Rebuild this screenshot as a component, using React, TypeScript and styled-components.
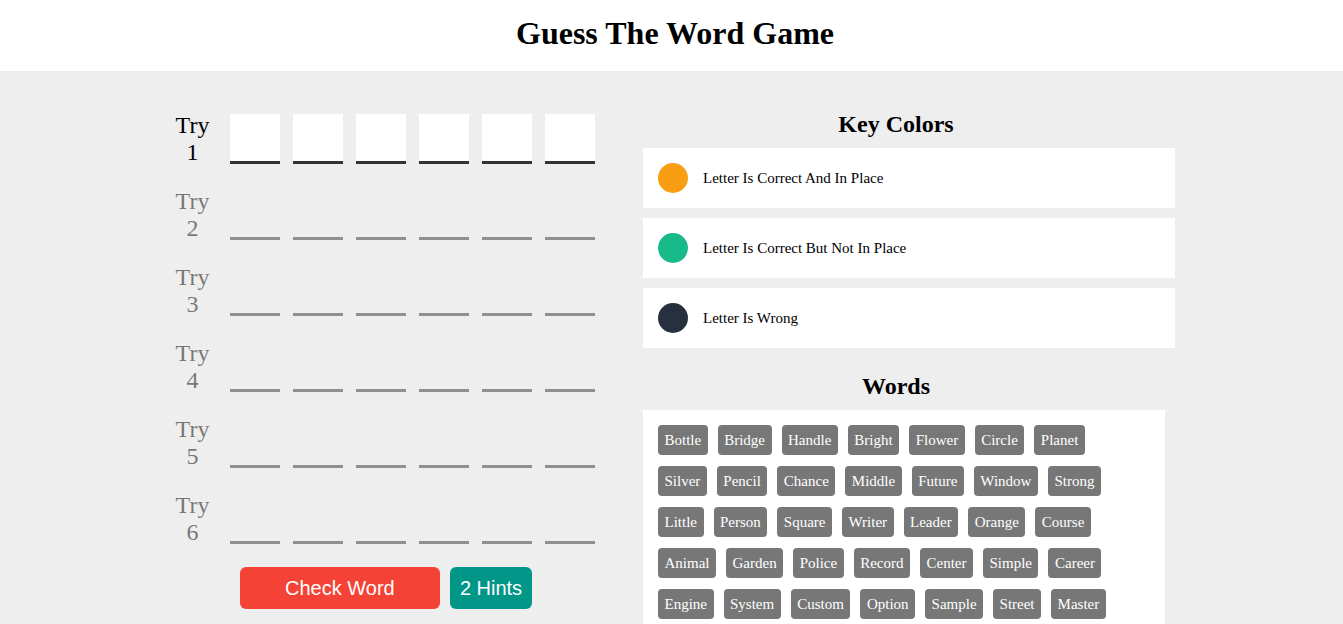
import React from 'react';
import styled, { createGlobalStyle } from 'styled-components';

const GlobalStyle = createGlobalStyle`
  * {
    box-sizing: border-box;
  }
  body {
    margin: 0;
    background-color: #eee;
    font-family: 'Liberation Serif', 'Times New Roman', serif;
  }
`;

const Header = styled.header`
  background-color: #fff;
  padding: 15px 0 19px 7px;
  text-align: center;
`;

const Title = styled.h1`
  margin: 0;
  font-size: 32px;
  line-height: 37px;
`;

const Main = styled.main`
  padding: 39px 0 0 7px;
`;

const Container = styled.div`
  width: 1000px;
  margin: 0 auto;
  display: flex;
  gap: 48px;
  align-items: flex-start;
`;

const GuessArea = styled.section`
  width: 420px;
  margin-top: 2px;
  display: flex;
  flex-direction: column;
  gap: 22px;
`;

const TryRow = styled.div<{ $disabled?: boolean }>`
  display: flex;
  align-items: center;
  opacity: ${(p) => (p.$disabled ? 0.5 : 1)};
`;

const TryLabel = styled.span`
  width: 35px;
  margin-right: 7px;
  font-size: 24px;
  line-height: 27px;
  text-align: center;
  color: #000;
`;

const Inputs = styled.div`
  display: flex;
  gap: 13px;
  margin-left: 13px;
`;

const LetterBox = styled.input<{ $disabled?: boolean }>`
  width: 50px;
  height: 50px;
  border: none;
  border-bottom: 3px solid #333;
  background-color: ${(p) => (p.$disabled ? 'transparent' : '#fff')};
  padding: 0;
  outline: none;
  text-align: center;
  font-size: 30px;
  font-family: inherit;
`;

const Controls = styled.div`
  display: flex;
  justify-content: center;
  gap: 10px;
  margin-top: -1px;
  padding-left: 2px;
`;

const Button = styled.button<{ $tone: 'check' | 'hint' }>`
  height: 42px;
  border: none;
  border-radius: 6px;
  color: #fff;
  font-family: 'Liberation Sans', Arial, sans-serif;
  font-size: 20px;
  cursor: pointer;
  padding: 0 10px;
  width: ${(p) => (p.$tone === 'check' ? '200px' : 'auto')};
  background-color: ${(p) => (p.$tone === 'check' ? '#f44336' : '#009688')};
`;

const Side = styled.aside`
  width: 532px;
`;

const SideHeading = styled.h2`
  margin: 0 0 10px;
  padding-right: 26px;
  font-size: 24px;
  line-height: 28px;
  text-align: center;
`;

const KeyList = styled.div`
  display: flex;
  flex-direction: column;
  gap: 10px;
  margin-bottom: 24px;
`;

const KeyItem = styled.div`
  display: flex;
  align-items: center;
  background-color: #fff;
  padding: 15px;
  font-size: 15px;
`;

const Dot = styled.span<{ $color: string }>`
  width: 30px;
  height: 30px;
  border-radius: 50%;
  background-color: ${(p) => p.$color};
  margin-right: 15px;
  flex-shrink: 0;
`;

const WordsBox = styled.div`
  width: 522px;
  background-color: #fff;
  padding: 15px 30px 15px 15px;
  display: flex;
  flex-wrap: wrap;
  gap: 11px 10px;
`;

const Chip = styled.span`
  height: 30px;
  line-height: 30px;
  padding: 0 6.5px;
  background-color: #777;
  color: #fff;
  border-radius: 4px;
  font-size: 15px;
`;

const words = [
  'Bottle', 'Bridge', 'Handle', 'Bright', 'Flower', 'Circle', 'Planet',
  'Silver', 'Pencil', 'Chance', 'Middle', 'Future', 'Window', 'Strong',
  'Little', 'Person', 'Square', 'Writer', 'Leader', 'Orange', 'Course',
  'Animal', 'Garden', 'Police', 'Record', 'Center', 'Simple', 'Career',
  'Engine', 'System', 'Custom', 'Option', 'Sample', 'Street', 'Master',
];

const keys = [
  { color: '#f89e13', text: 'Letter Is Correct And In Place' },
  { color: '#18ba89', text: 'Letter Is Correct But Not In Place' },
  { color: '#27303f', text: 'Letter Is Wrong' },
];

const App = () => {
  const tries = [1, 2, 3, 4, 5, 6];
  return (
    <>
      <GlobalStyle />
      <Header>
        <Title>Guess The Word Game</Title>
      </Header>
      <Main>
        <Container>
          <GuessArea>
            {tries.map((t) => (
              <TryRow key={t} $disabled={t !== 1}>
                <TryLabel>Try {t}</TryLabel>
                <Inputs>
                  {[0, 1, 2, 3, 4, 5].map((i) => (
                    <LetterBox
                      key={i}
                      maxLength={1}
                      disabled={t !== 1}
                      $disabled={t !== 1}
                    />
                  ))}
                </Inputs>
              </TryRow>
            ))}
            <Controls>
              <Button $tone="check">Check Word</Button>
              <Button $tone="hint">2 Hints</Button>
            </Controls>
          </GuessArea>
          <Side>
            <SideHeading>Key Colors</SideHeading>
            <KeyList>
              {keys.map((k) => (
                <KeyItem key={k.text}>
                  <Dot $color={k.color} />
                  {k.text}
                </KeyItem>
              ))}
            </KeyList>
            <SideHeading>Words</SideHeading>
            <WordsBox>
              {words.map((w) => (
                <Chip key={w}>{w}</Chip>
              ))}
            </WordsBox>
          </Side>
        </Container>
      </Main>
    </>
  );
};

export default App;
